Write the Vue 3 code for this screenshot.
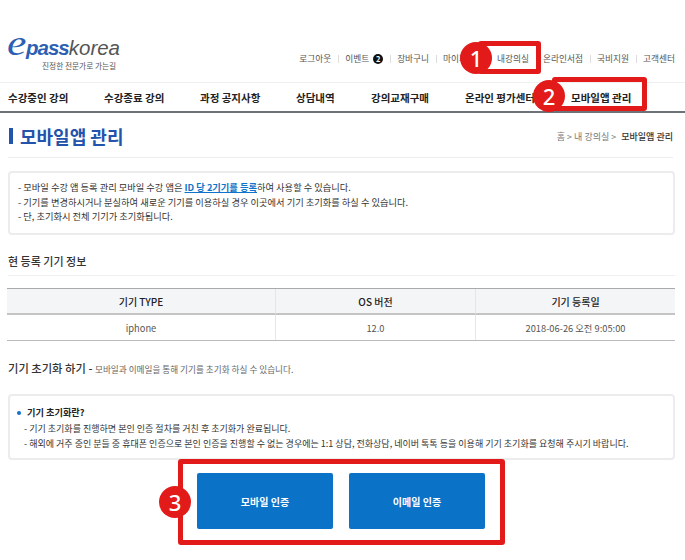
<script setup>
const util = ['로그아웃', '이벤트', '장바구니', '마이페이지', '내강의실', '온라인서점', '국비지원', '고객센터']
const nav = ['수강중인 강의', '수강종료 강의', '과정 공지사항', '상담내역', '강의교재구매', '온라인 평가센터', '모바일앱 관리']
</script>

<template>
  <div class="page">
    <header class="top">
      <div class="logo">
        <div class="wordmark"><span class="e">e</span><span class="pass">pass</span><span class="korea">korea</span></div>
        <div class="tag">진정한 전문가로 가는길</div>
      </div>
      <ul class="util">
        <li v-for="u in util" :key="u">{{ u }}<b v-if="u === '이벤트'" class="badge">2</b></li>
      </ul>
    </header>
    <nav class="nav">
      <a v-for="n in nav" :key="n">{{ n }}</a>
    </nav>
    <div class="title-row">
      <h1>모바일앱 관리</h1>
      <div class="crumb">홈 &gt; 내 강의실 &gt; <b>모바일앱 관리</b></div>
    </div>
    <div class="box info">
      <p>- 모바일 수강 앱 등록 관리 모바일 수강 앱은 <a>ID 당 2기기를 등록</a>하여 사용할 수 있습니다.</p>
      <p>- 기기를 변경하시거나 분실하여 새로운 기기를 이용하실 경우 이곳에서 기기 초기화를 하실 수 있습니다.</p>
      <p>- 단, 초기화시 전체 기기가 초기화됩니다.</p>
    </div>
    <h2 class="sub">현 등록 기기 정보</h2>
    <div class="table">
      <div class="th">기기 TYPE</div><div class="th">OS 버전</div><div class="th">기기 등록일</div>
      <div class="td">iphone</div><div class="td">12.0</div><div class="td">2018-06-26 오전 9:05:00</div>
    </div>
    <div class="reset"><b>기기 초기화 하기 -</b> <span>모바일과 이메일을 통해 기기를 초기화 하실 수 있습니다.</span></div>
    <div class="box help">
      <p class="q">기기 초기화란?</p>
      <p>- 기기 초기화를 진행하면 본인 인증 절차를 거친 후 초기화가 완료됩니다.</p>
      <p>- 해외에 거주 중인 분들 중 휴대폰 인증으로 본인 인증을 진행할 수 없는 경우에는 1:1 상담, 전화상담, 네이버 톡톡 등을 이용해 기기 초기화를 요청해 주시기 바랍니다.</p>
    </div>
    <div class="btns">
      <button>모바일 인증</button>
      <button>이메일 인증</button>
    </div>

    <div class="mark m1"></div>
    <div class="mark m2"></div>
    <div class="mark m3"></div>
    <div class="num n1">1</div>
    <div class="num n2">2</div>
    <div class="num n3">3</div>
  </div>
</template>

<style>
html, body { margin: 0; background: #fff; }
</style>

<style scoped>
.page {
  position: relative;
  width: 685px;
  height: 560px;
  overflow: hidden;
  background: #fff;
  color: #333;
  font-family: "Noto Sans CJK KR", "Noto Sans", sans-serif;
}
p, h1, h2, ul { margin: 0; padding: 0; }
.top {
  height: 82px;
  box-sizing: border-box;
  padding: 40px 3px 0 7px;
  display: flex;
  justify-content: space-between;
  align-items: flex-start;
}
.wordmark {
  height: 28px;
  margin-top: -7px;
  display: flex;
  align-items: baseline;
  font-family: "Liberation Sans", sans-serif;
  font-style: italic;
  font-size: 20.5px;
  line-height: 21px;
}
.e {
  display: inline-block;
  width: 19px;
  color: #2d5fb3;
  font-family: "Liberation Serif", serif;
  font-size: 35px;
  line-height: 21px;
  transform: scaleX(1.25);
  transform-origin: left bottom;
}
.pass { color: #2d5fb3; font-weight: bold; letter-spacing: -1px; }
.korea { color: #555; }
.tag {
  font-size: 7.7px;
  line-height: 10px;
  color: #555;
  margin: 0 0 0 35px;
  white-space: nowrap;
}
.util {
  display: flex;
  list-style: none;
  margin-top: 12px;
  font-size: 8.7px;
  line-height: 14px;
  color: #555;
}
.util li { display: flex; align-items: center; padding: 0 7px; position: relative; white-space: nowrap; }
.util li + li::before {
  content: "";
  position: absolute;
  left: 0;
  top: 3px;
  height: 8px;
  width: 1px;
  background: #ddd;
}
.badge {
  width: 10px;
  height: 10px;
  margin-left: 4px;
  border-radius: 50%;
  background: #111;
  color: #fff;
  font-size: 7.5px;
  line-height: 10px;
  text-align: center;
}
.nav {
  height: 28px;
  border-top: 1px solid #f0f0f0;
  border-bottom: 2px solid #6d7278;
  display: grid;
  grid-template-columns: 96px 96px 96px 75px 94px 106px 1fr;
  padding-left: 8px;
  align-items: center;
  font-size: 10.5px;
  font-weight: 700;
  color: #222;
  white-space: nowrap;
}
.title-row {
  height: 42px;
  padding-top: 2px;
  margin: 0 12px 0 8px;
  border-bottom: 1px solid #eee;
  display: flex;
  justify-content: space-between;
  align-items: center;
}
h1 {
  font-size: 18px;
  line-height: 16px;
  font-weight: 700;
  color: #2353ab;
  border-left: 4px solid #2353ab;
  padding-left: 7px;
  margin-left: 1px;
}
.crumb { font-size: 9px; color: #777; }
.crumb b { color: #333; font-weight: 500; margin-left: 3px; }
.box {
  box-sizing: border-box;
  width: 667px;
  margin-left: 8px;
  border: 2px solid #ececec;
  border-radius: 4px;
  color: #333;
  white-space: nowrap;
}
.info { height: 64px; margin-top: 13px; padding: 7px 8px; font-size: 9.25px; line-height: 14.6px; }
.info a { color: #0f74c9; font-weight: 700; text-decoration: underline; }
.sub {
  margin: 19px 10px 0 8px;
  height: 21px;
  font-size: 11px;
  line-height: 14px;
  font-weight: 500;
  border-bottom: 1px solid #eee;
}
.table {
  margin: 12px 10px 0 7px;
  display: grid;
  grid-template-columns: 268px 200px 200px;
  border-top: 1px solid #aaa;
  border-bottom: 1px solid #bbb;
  text-align: center;
  font-size: 10px;
}
.th, .td { display: flex; align-items: center; justify-content: center; box-sizing: border-box; }
.th {
  height: 26px;
  background: #f4f5f7;
  border-bottom: 2px solid #c4c4c4;
  font-weight: 500;
  color: #222;
}
.td { height: 25px; color: #555; font-size: 9.3px; }
.th + .th, .td + .td { border-left: 1px solid #e6e6e6; }
.reset {
  margin: 19px 0 0 8px;
  height: 17px;
  font-size: 11.3px;
  line-height: 17px;
  white-space: nowrap;
}
.reset b { font-weight: 500; color: #333; }
.reset span { font-size: 8.65px; color: #666; }
.help { height: 66px; margin-top: 17px; padding: 9px 0 0 7px; font-size: 9.03px; line-height: 15.5px; }
.help .q { font-size: 9.2px; font-weight: 700; position: relative; padding-left: 10px; color: #222; }
.help .q::before {
  content: "";
  position: absolute;
  left: 0;
  top: 6px;
  width: 4px;
  height: 4px;
  border-radius: 50%;
  background: #0f74c9;
}
.help p + p { margin-left: 7px; }
.btns {
  margin: 13px 0 0 197px;
  display: flex;
  gap: 16px;
}
button {
  width: 136px;
  height: 56px;
  border: 0;
  border-radius: 2px;
  background: #0a72c7;
  color: #fff;
  font: 700 10px "Noto Sans CJK KR", sans-serif;
}
.mark { position: absolute; box-sizing: border-box; border: 5px solid #e21a1a; border-radius: 3px; }
.m1 { left: 478px; top: 41px; width: 63px; height: 33px; }
.m2 { left: 552px; top: 77px; width: 95px; height: 34px; }
.m3 { left: 178px; top: 459px; width: 327px; height: 86px; }
.num {
  position: absolute;
  width: 32px;
  height: 32px;
  border-radius: 50%;
  background: #e21a1a;
  color: #fff;
  font: 500 22px/32px "Noto Sans", sans-serif;
  text-align: center;
}
.n1 { left: 460px; top: 42px; }
.n2 { left: 533px; top: 80px; }
.n3 { left: 159px; top: 486px; }
</style>
